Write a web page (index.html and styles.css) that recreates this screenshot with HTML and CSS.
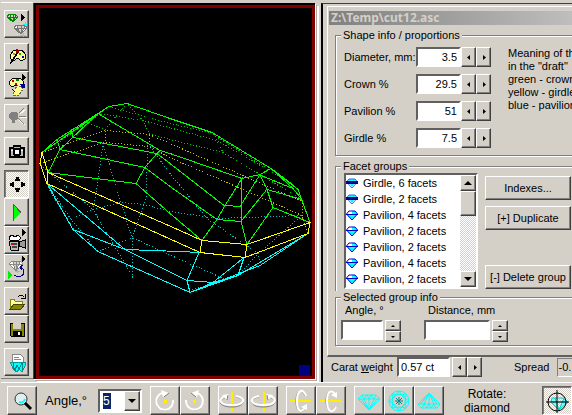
FILE: index.html
```html
<!DOCTYPE html>
<html lang="en">
<head>
<meta charset="utf-8">
<title>cut12.asc</title>
<link rel="stylesheet" href="styles.css">
</head>
<body>
<svg class="defs" aria-hidden="true">
  <symbol id="gem" viewBox="0 0 12 11"><path d="M3 1h6l3 3-6 6-6-6z" fill="#0ff"/><path d="M3 1h3v3H1z" fill="#fff"/><path d="M3 1h6l2.500 3-5.500 6L.5 4z M0 4.500h12" fill="none" stroke="#00c"/></symbol>
  <symbol id="gem-girdle" viewBox="0 0 12 11"><path d="M3 1h6l3 3-6 6-6-6z" fill="#fff"/><path d="M3 1h6l1 2H2zM4 6h4L6 9z" fill="#0ff"/><path d="M3 1h6l2.500 3-5.500 6L.5 4z" fill="none" stroke="#36e"/><path d="M0 3h12v3H0z" fill="#000090"/></symbol>
  <symbol id="left" viewBox="0 0 4 5"><path d="M3 0v5L0 2.500z"/></symbol>
  <symbol id="right" viewBox="0 0 4 5"><path d="M1 0v5l3-2.500z"/></symbol>
  <symbol id="up" viewBox="0 0 8 4"><path d="M0 4h8L4 0z"/></symbol>
  <symbol id="down" viewBox="0 0 8 4"><path d="M0 0h8L4 4z"/></symbol>
</svg>
<main class="work">
  <nav class="tools" aria-label="Tools">
    <button class="tool" aria-label="Orientation"><svg viewBox="0 0 24 26"><path d="M4 3h6l3 3-5 5-6-5zM2 6h11M5 3v3l3 5 2-5V3M8 3v8" fill="none" stroke="#080"/><path d="M16 3v7l4-3.500z"/><path d="M11 14h9l2 3-6 6-7-6zM9 17h13M12 14v3l4 6 3-6v-3M16 14v9" fill="#fff" stroke="#777"/><path d="M20 11v4M18 13h4M18 22v4M15 24h5" stroke="#0ff"/></svg></button>
    <button class="tool sep" aria-label="Colors"><svg viewBox="0 0 24 26"><path d="M6 10l3-4h8l3 4v5l-4 2-3-3-5 3-3-3z" fill="#ff9" stroke="#000"/><path d="M11 5l3 1v3h-3z" fill="#900"/><path d="M12 8L6 17l-1 3 3-2 5-9z"/><path d="M14 9h2v2h-2z" fill="#0b0"/><path d="M17 12h2v2h-2z" fill="#00c"/><path d="M8 9h2v2H8z" fill="#c80"/></svg></button>
    <button class="tool" aria-label="Palette"><svg viewBox="0 0 24 26"><path d="M5 9l3-3h7l3 3v4l-4 2-3-2-4 2-3-3z" fill="#ff9" stroke="#000"/><path d="M7 9h2M10 12h2" stroke="#c00" stroke-width="2"/><path d="M11 8h3" stroke="#080" stroke-width="2"/><path d="M17 2v7l4-3.500z"/><path d="M8 19l5-6 5 4-4 6-6 1z" fill="#ff8" stroke="#666" stroke-dasharray="2 1"/><path d="M15 12h5v4h-3z" fill="#009"/><path d="M7 17l3 3" stroke="#000"/></svg></button>
    <button class="tool sep" aria-label="Light"><svg viewBox="0 0 24 26"><path d="M6 7h5l2 2v5l-3 1v3H7v-3l-3-2V9z" fill="#808080"/><path d="M15 9l6-5M15 12h7M14 15l6 5" fill="none" stroke="#fff"/><path d="M14 8l5-5M14 11h7M13 13l6 6" fill="none" stroke="#808080"/></svg></button>
    <button class="tool sep" aria-label="Camera"><svg viewBox="0 0 24 26"><path d="M5 10h3l1-2h6l1 2h3v9H5z" fill="#bbb" stroke="#000" stroke-width="2"/><circle cx="12" cy="14" r="3.500" fill="#fff" stroke="#000" stroke-width="2"/><path d="M6 12h2M16 12h2" stroke="#fff"/></svg></button>
    <button class="tool sep pressed" aria-label="Move"><svg viewBox="0 0 24 26"><path d="M11 6h3v2h1v2h-5V8h1zM10 17h5v2h-1v2h-3v-2h-1zM5 12h2v-1h2v5H7v-1H5zM20 12h-2v-1h-2v5h2v-1h2z"/></svg></button>
    <button class="tool" aria-label="Play"><svg viewBox="0 0 24 26"><path d="M8 5v17l8-8.500z" fill="#0f0"/><path d="M8 5v17M8 5l8 8.500" stroke="#555" fill="none"/></svg></button>
    <button class="tool" aria-label="Record video"><svg viewBox="0 0 24 26"><path d="M17 2v7l4-3.500z"/><path d="M4 14h9v9H6z" fill="#bbb" stroke="#000"/><path d="M4 10l3-2 3 2 3-2 3 3-2 2H5z" fill="#fff" stroke="#000"/><path d="M14 15l6-2v8l-6-2z" fill="#999" stroke="#000"/><path d="M6 17h6M7 20h5" stroke="#444" stroke-width="2"/><path d="M6 17h2" stroke="#e00"/></svg></button>
    <button class="tool" aria-label="Animate rotation"><svg viewBox="0 0 24 26"><path d="M17 1v6l4-3z"/><path d="M7 6h8l3 3-7 7-7-7zM4 9h14M8 6v3l3 7 3-7V6M11 6v10" fill="#fff" stroke="#888"/><path d="M16 3v5M12 14v4M10 16h5" stroke="#0ff"/><path d="M3 16v8l5-4z" fill="#0e0"/><path d="M9 20c4 3 10 1 10-3 0-3-2-5-4-5m0 0l3-2m-3 2l2 3" fill="none" stroke="#000080"/></svg></button>
    <button class="tool sep" aria-label="Open"><svg viewBox="0 0 24 26"><path d="M5 20v-9h4l1 2h7v3" fill="#ffa" stroke="#880"/><path d="M5 21l4-5h11l-4 5z" fill="#880" stroke="#440"/><path d="M13 9c2-3 5-2 6 0m1-3v4h-4" fill="none" stroke="#000"/></svg></button>
    <button class="tool" aria-label="Save"><svg viewBox="0 0 24 26"><path d="M5 7h14v13H6l-1-1z" fill="#880" stroke="#000"/><path d="M8 7h8v6H8z" fill="#d4d0c8"/><path d="M8 15h9v5H8z"/><path d="M13 16h2v3h-2z" fill="#fff"/></svg></button>
    <button class="tool sep" aria-label="Report"><svg viewBox="0 0 24 26"><path d="M7 5h8l3 3v11H7z" fill="#fff" stroke="#888"/><path d="M9 8h5M9 10h7" stroke="#888"/><path d="M5 13h15v4l-3 6-3-3-2 3-3-2-2-4z" fill="#0ff" stroke="#099"/><path d="M8 14v4l2 3 2-5 2 4 3-6v7" fill="none" stroke="#088"/></svg></button>
  </nav>

  <section class="view" aria-label="Diamond wireframe">
    <svg class="scene" viewBox="39 8 273 367" preserveAspectRatio="xMidYMid meet">
      <g class="hidden green"><path d="M98 113L143 120 217 140 290 182M109 106L170 123 213 133M88 123L105 129 127 103 143 120 149 133 170 139 223 152 213 133M223 152L302 199M57 139L88 123 98 113M213 134L271 170M60 141L98 115"/></g>
      <g class="hidden yellow"><path d="M42 152L105 130 149 134 170 143 302 201V215L308 233M40 163L60 156 105 142 149 146 170 157 302 215M105 130V142M149 134V146"/></g>
      <g class="hidden cyan"><path d="M103 143L95 200 93 209 133 277M103 143L115 183 121 202 132 237 133 277M148 145L146 198 144 204 132 237M71 219L93 209 121 202 144 204 170 211 217 218 302 215M150 146L170 173 207 218 258 253 260 262M41 165L93 209M47 183L71 219 98 251 132 237 180 259 228 280M302 215L258 253 238 275 190 290M48 187L74 229"/></g>
      <g class="edge cyan"><path d="M47 183L73 229 98 251 190 292 238 275 308 233M47 183L125 249M73 229L125 249 180 251 199 252 187 280 190 292M125 249L187 280 213 282 238 275M244 257L213 282 190 292M244 257L238 275M190 292L260 265 308 233"/></g>
      <g class="edge green"><path d="M42 152L109 106 127 103 170 118 212 132 271 168 298 189 302 200 310 222M42 152L57 139 98 113 109 106M57 139L60 149 98 113 160 150 170 153 242 178 260 174 271 168M71 129L73 137 157 153M60 149L145 167M48 172L136 183M60 149L48 172M160 150L157 153 145 167 136 183M157 153L170 163 224 205M145 167L170 186 217 219M136 183L170 213 202 240M202 240L217 219 241 221 247 244M217 219L225 205 240 206M225 205L242 178 241 221M247 244L273 207 310 222M241 221L266 190M240 206L260 174 267 189 273 207M267 189L302 199M261 175L293 188 302 199M271 168L293 188M271 168L290 182 298 189"/></g>
      <g class="edge yellow"><path d="M42 152L40 163 47 183 48 172 42 152M48 172L180 230 202 240 247 244 310 222 308 233 245 257 200 252 180 243 47 183M202 240L200 252M247 244L245 257"/></g>
      <path class="marker" d="M299 364h11v11h-11z"/>
    </svg>
  </section>

  <section class="panel">
    <div class="window">
      <h1 class="title">Z:\Temp\cut12.asc</h1>
      <fieldset class="group shape">
        <legend>Shape info / proportions</legend>
        <div class="shape-body">
          <div class="fields">
            <label for="diameter">Diameter, mm:</label><span class="spin"><input id="diameter" value="3.5"><button aria-label="Decrease diameter"><svg><use href="#left"/></svg></button><button aria-label="Increase diameter"><svg><use href="#right"/></svg></button></span>
            <label for="crown">Crown %</label><span class="spin"><input id="crown" value="29.5"><button aria-label="Decrease crown"><svg><use href="#left"/></svg></button><button aria-label="Increase crown"><svg><use href="#right"/></svg></button></span>
            <label for="pavilion">Pavilion %</label><span class="spin"><input id="pavilion" value="51"><button aria-label="Decrease pavilion"><svg><use href="#left"/></svg></button><button aria-label="Increase pavilion"><svg><use href="#right"/></svg></button></span>
            <label for="girdle">Girdle %</label><span class="spin"><input id="girdle" value="7.5"><button aria-label="Decrease girdle"><svg><use href="#left"/></svg></button><button aria-label="Increase girdle"><svg><use href="#right"/></svg></button></span>
          </div>
          <p class="note">Meaning of th<br>in the "draft"<br>green - crown<br>yellow - girdle<br>blue - pavilion</p>
        </div>
      </fieldset>
      <fieldset class="group facets">
        <legend>Facet groups</legend>
        <div class="facets-body">
          <div class="listbox">
            <ul>
              <li><svg><use href="#gem-girdle"/></svg>Girdle, 6 facets</li>
              <li><svg><use href="#gem-girdle"/></svg>Girdle, 2 facets</li>
              <li><svg><use href="#gem"/></svg>Pavilion, 4 facets</li>
              <li><svg><use href="#gem"/></svg>Pavilion, 2 facets</li>
              <li><svg><use href="#gem"/></svg>Pavilion, 2 facets</li>
              <li><svg><use href="#gem"/></svg>Pavilion, 4 facets</li>
              <li><svg><use href="#gem"/></svg>Pavilion, 2 facets</li>
            </ul>
            <div class="scroll">
              <button aria-label="Scroll up"><svg><use href="#up"/></svg></button>
              <div class="thumb"></div>
              <button class="end" aria-label="Scroll down"><svg><use href="#down"/></svg></button>
            </div>
          </div>
          <div class="actions">
            <button>Indexes...</button>
            <button>[+] Duplicate</button>
            <button class="end">[-] Delete group</button>
          </div>
        </div>
      </fieldset>
      <fieldset class="group selected">
        <legend>Selected group info</legend>
        <div class="selected-body">
          <div class="value">
            <label for="angle">Angle, °</label>
            <span class="updown"><input id="angle" class="short"><span class="pair"><button aria-label="Increase angle"><svg><use href="#up"/></svg></button><button aria-label="Decrease angle"><svg><use href="#down"/></svg></button></span></span>
          </div>
          <div class="value">
            <label for="distance">Distance, mm</label>
            <span class="updown"><input id="distance" class="long"><span class="pair"><button aria-label="Increase distance"><svg><use href="#up"/></svg></button><button aria-label="Decrease distance"><svg><use href="#down"/></svg></button></span></span>
          </div>
        </div>
      </fieldset>
    </div>
    <div class="weight">
      <label for="carat">Carat <u>w</u>eight</label>
      <span class="spin carat"><input id="carat" value="0.57 ct"><button aria-label="Decrease weight"><svg><use href="#left"/></svg></button><button aria-label="Increase weight"><svg><use href="#right"/></svg></button></span>
      <span>Spread</span><output class="spread">-0.</output>
    </div>
  </section>
</main>

<footer class="bar">
  <button class="cmd" aria-label="Zoom"><svg viewBox="0 0 28 26"><circle cx="13" cy="11" r="6" fill="#e0f0f0" stroke="#333"/><path d="M11 14q4 2 6-3" stroke="#0ff" stroke-width="2" fill="none"/><path d="M17 15l6 6" stroke="#000" stroke-width="3"/></svg></button>
  <label class="step-label" for="step">Angle,°</label>
  <span class="combo"><input id="step" value="5" size="1"><button aria-label="Choose angle"><svg><use href="#down"/></svg></button></span>
  <div class="set">
    <button class="cmd gray" aria-label="Rotate clockwise"><svg viewBox="0 0 28 26"><path d="M22 14A8.500 8.500 0 1 1 11 6" class="shade"/><path d="M22 12A8.500 8.500 0 1 1 12 5" class="arc"/><path d="M10 2l8 3-6 4z" fill="#fff"/><path d="M18 5l-5 4" class="thin"/><path d="M13 12h3v3h-3z" fill="#fe0"/></svg></button>
    <button class="cmd" aria-label="Rotate counter-clockwise"><svg viewBox="0 0 28 26"><path d="M5 14A8.500 8.500 0 1 0 17 6" class="shade"/><path d="M5 12A8.500 8.500 0 1 0 16 5" class="arc"/><path d="M18 2l-8 3 6 4z" fill="#fff"/><path d="M10 5l5 4" class="thin"/><path d="M12 12h3v3h-3z" fill="#fe0"/></svg></button>
  </div>
  <div class="set">
    <button class="cmd" aria-label="Turn left"><svg viewBox="0 0 28 26"><path d="M13 3v21" class="axis"/><path d="M17 9c11 2 9 10-4 10S-3 12 8 9" class="shade"/><path d="M17 8c11 2 9 9-4 9S-2 11 7 8" class="arc"/><path d="M3 7l7-1-2 6z" fill="#fff"/><path d="M9 7l-1 5" class="thin"/></svg></button>
    <button class="cmd" aria-label="Turn right"><svg viewBox="0 0 28 26"><path d="M15 3v21" class="axis"/><path d="M10 9C-1 11 1 19 14 19s16-7 6-10" class="shade"/><path d="M10 8C-1 10 1 17 14 17s15-6 7-9" class="arc"/><path d="M24 7l-7-1 2 6z" fill="#fff"/><path d="M18 7l1 5" class="thin"/></svg></button>
  </div>
  <div class="set">
    <button class="cmd" aria-label="Tilt down"><svg viewBox="0 0 28 26"><path d="M3 13h21" class="axis"/><path d="M18 8C15-1 9 2 9 13s5 13 9 8" class="shade"/><path d="M19 8C16-1 10 2 10 13s4 12 8 7" class="arc"/><path d="M14 19l6-3v6z" fill="#fff"/></svg></button>
    <button class="cmd" aria-label="Tilt up"><svg viewBox="0 0 28 26"><path d="M3 13h21" class="axis"/><path d="M18 19c-3 8-9 4-9-6s5-13 9-7" class="shade"/><path d="M19 19c-4 8-9 4-9-6s4-12 8-7" class="arc"/><path d="M14 7l6 3V4z" fill="#fff"/></svg></button>
  </div>
  <div class="set">
    <button class="cmd" aria-label="Side view"><svg class="wire" viewBox="0 0 28 26"><path d="M7 7h14l4 4-11 11L3 11zM3 11h22M7 7l2 4 5 11 5-11 2-4M9 11l3-4 2 4 2-4 3 4M14 11v11M6 11l8 11 8-11"/></svg></button>
    <button class="cmd" aria-label="Top view"><svg class="wire" viewBox="0 0 28 26"><circle cx="14" cy="13" r="10"/><circle cx="14" cy="13" r="7"/><path d="M14 3l4 6 6 4-6 4-4 6-4-6-6-4 6-4zM7 6l7 1 7-1-1 7 1 7-7-1-7 1 1-7z"/><path d="M14 9v8M10 13h8M11 10l6 6M17 10l-6 6" stroke="#088"/></svg></button>
    <button class="cmd" aria-label="Back view"><svg class="wire" viewBox="0 0 28 26"><path d="M14 5l11 11-3 4H6l-3-4zM3 16h22M14 5L9 16l-2 4M14 5l5 11 2 4M14 5v11M9 16l3 4 2-4 2 4 3-4M14 5L6 16M14 5l8 11"/></svg></button>
  </div>
  <span class="mode">Rotate: diamond</span>
  <button class="cmd pressed" aria-label="Rotate diamond"><svg viewBox="0 0 28 26"><path d="M9 10h11l5 4-9 8-8-8zM8 14h16M12 10l4 12 5-12" fill="#7ff" stroke="#0cc"/><circle cx="14" cy="14" r="9" fill="none" stroke="#000"/><path d="M14 2v23M3 14h23" stroke="#000"/></svg></button>
</footer>
</body>
</html>
```

FILE: styles.css
```css
* { box-sizing: border-box; }

body {
  margin: 0;
  height: 100vh;
  overflow: hidden;
  display: flex;
  flex-direction: column;
  background: #d4d0c8;
  color: #000;
  font: 11px/13px "Liberation Sans", Arial, sans-serif;
}

button, input { font: inherit; color: inherit; margin: 0; border-radius: 0; }
svg { display: block; }
.defs { position: absolute; width: 0; height: 0; }

button, .thumb {
  display: flex;
  align-items: center;
  justify-content: center;
  padding: 0;
  background: #d4d0c8;
  border: 1px solid;
  border-color: #fff #404040 #404040 #fff;
  box-shadow: inset -1px -1px #808080;
}

input {
  min-width: 0;
  padding: 0 2px;
  background: #fff;
  border: 2px solid;
  border-color: #606060 #fff #fff #606060;
  outline: 0;
}

.work { flex: 1; min-height: 0; display: flex; }

/* Left tool strip */
.tools {
  flex: none;
  width: 32px;
  margin: 2px 0 3px 1px;
  padding: 7px 3px 0;
  border-top: 1px solid #fff;
  border-bottom: 1px solid #808080;
}
.tool { width: 25px; height: 28px; }
.tool svg { flex: none; width: 24px; height: 26px; }
.tool.sep { margin-top: 5px; }
.pressed {
  background: repeating-conic-gradient(#fff 0 25%, #d4d0c8 0 50%) 0 0 / 2px 2px;
  border-color: #606060 #fff #fff #606060;
  box-shadow: inset 1px 1px #808080;
}
.tool svg { shape-rendering: crispEdges; }

/* 3D view */
.view {
  flex: 1;
  min-width: 0;
  margin: 3px 6px 3px 0;
  padding: 2px 0 0 2px;
  background: #000;
  border-left: 1px solid #404040;
  box-shadow: 1px 1px #fff, 2px 2px #b0aca4, 4px 3px #fff;
}
.scene {
  width: 100%;
  height: 100%;
  border: 3px solid #800000;
  background: #000;
  shape-rendering: crispEdges;
}
.scene g { fill: none; stroke-width: 1; }
.edge.green { stroke: #0f0; }
.edge.yellow { stroke: #ff0; }
.edge.cyan { stroke: #0ff; }
.hidden { stroke-dasharray: 1 2; }
.hidden.green { stroke: #00c000; }
.hidden.yellow { stroke: #c8c000; }
.hidden.cyan { stroke: #00c0c0; }
.marker { fill: #000080; }

/* Right panel */
.panel {
  flex: none;
  width: 251px;
  margin-top: 3px;
  overflow: hidden;
  border-left: 2px solid #000;
  border-top: 1px solid #404040;
}
.window {
  margin: 2px -8px 0 4px;
  padding: 4px 0 9px 1px;
  border: 1px solid #fff;
  border-bottom: 2px solid #606060;
}
.title {
  margin: 0;
  padding-left: 2px;
  background: linear-gradient(90deg, #808080, #c0c0c0);
  color: #d4d0c8;
  font: bold 12px/14px "Noto Sans", "Open Sans", sans-serif;
}
.group {
  min-width: 0;
  margin: 0 0 0 6px;
  padding: 0;
  border: 1px solid #808080;
  box-shadow: 1px 1px #fff, inset 1px 1px #fff;
}
.group legend { margin-left: 5px; padding: 0 2px; background: #d4d0c8; }
.shape { margin-top: 4px; }
.shape-body { display: flex; padding: 5px 0 7px 8px; }
.fields { display: grid; grid-template-columns: 72px auto; row-gap: 7px; align-items: center; }
.spin { display: flex; height: 20px; }
.spin input { width: 45px; text-align: right; }
.spin button { width: 15px; }
.spin button svg { width: 4px; height: 5px; }
.note { margin: 0 0 0 17px; white-space: nowrap; }

.facets { margin-top: 4px; border-bottom: 0; box-shadow: inset 1px 1px #fff; }
.facets-body { display: flex; gap: 7px; padding: 0 0 2px 8px; }
.listbox {
  display: flex;
  width: 134px;
  background: #fff;
  border: 2px solid;
  border-color: #606060 #fff #fff #606060;
}
.listbox ul { flex: 1; margin: 0; padding: 0; list-style: none; }
.listbox li { display: flex; align-items: center; gap: 5px; height: 16px; white-space: nowrap; }
.listbox li svg { width: 12px; height: 11px; }
.scroll {
  display: flex;
  flex-direction: column;
  width: 16px;
  background: repeating-conic-gradient(#fff 0 25%, #d4d0c8 0 50%) 0 0 / 2px 2px;
}
.scroll button { height: 16px; }
.scroll svg { width: 8px; height: 4px; }
.thumb { height: 25px; }
.scroll .end, .actions .end { margin-top: auto; }
.actions { display: flex; flex-direction: column; gap: 6px; width: 86px; padding-top: 3px; }
.actions button { height: 24px; white-space: nowrap; }

.selected-body { display: flex; gap: 23px; padding: 0 0 3px 5px; }
.value label { display: block; padding-left: 4px; }
.updown { display: flex; gap: 2px; margin-top: 3px; }
.updown input { height: 20px; }
.short { width: 42px; }
.long { width: 66px; }
.pair { display: flex; flex-direction: column; width: 16px; }
.pair button { height: 11px; }
.pair svg { width: 4px; height: 2px; }

.weight { display: flex; align-items: center; padding-left: 8px; white-space: nowrap; }
.weight > * { flex: none; }
.weight label { width: 66px; }
.carat { margin-right: 32px; }
.carat input { width: 53px; margin-right: 2px; text-align: left; }
.spread {
  margin-left: 8px;
  padding: 2px 0;
  width: 30px;
  border: 1px solid;
  border-color: #808080 #fff #fff #808080;
}

/* Bottom command bar */
.bar {
  flex: none;
  display: flex;
  align-items: center;
  height: 33px;
  margin-left: 1px;
  padding: 3px 0 0 6px;
  border-top: 1px solid #fff;
  font-size: 12px;
}
.cmd { flex: none; width: 30px; height: 29px; }
.cmd svg { width: 28px; height: 26px; }
.step-label { margin-left: 8px; width: 53px; font-size: 13px; }
.combo {
  display: flex;
  width: 44px;
  height: 24px;
  background: #fff;
  border: 2px solid;
  border-color: #606060 #fff #fff #606060;
}
.combo input { width: 8px; height: 16px; margin: 2px auto 0 3px; padding: 0; border: 0; background: #0a246a; color: #fff; }
.combo button { width: 16px; }
.combo button svg { width: 8px; height: 4px; }
.set { display: flex; margin-left: 8px; }
.arc { fill: none; stroke: #fff; stroke-width: 2; }
.shade { fill: none; stroke: #808080; }
.thin { fill: none; stroke: #808080; }
.axis { stroke: #fe0; stroke-width: 2; }
.wire { fill: none; stroke: #0ff; }
.mode { width: 58px; margin: 0 auto 0 14px; text-align: center; font-size: 12px; line-height: 14px; }
```
